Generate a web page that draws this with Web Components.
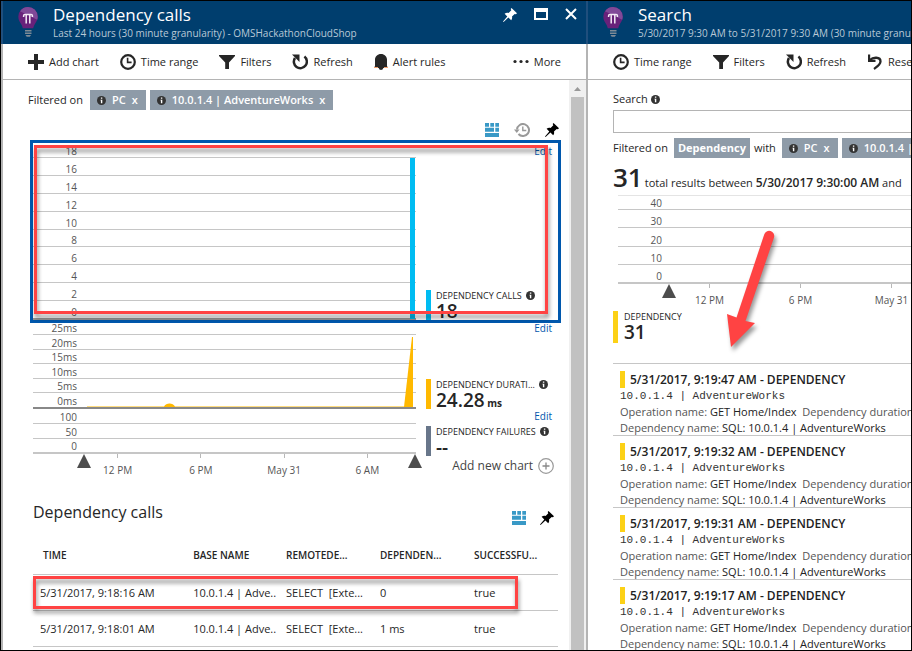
<!DOCTYPE html>
<html lang="en">
<head>
<meta charset="utf-8">
<title>Dependency calls</title>
<style>
  html, body { height: 100%; }
  body { margin: 0; overflow: hidden; background: #000; font-family: "Open Sans", "Noto Sans", sans-serif; font-size: 11px; line-height: 16px; color: #262626; }
</style>
</head>
<body>
<portal-page></portal-page>
<script>
const ICONS = {
  plus: [16, 16, '<path d="M6 0h4v6h6v4h-6v6H6v-6H0V6h6z" fill="currentColor"/>'],
  clock: [16, 16, '<circle cx="8" cy="8" r="6.8" fill="none" stroke="currentColor" stroke-width="2.2"/><path d="M7.6 3.8v4.6h4" fill="none" stroke="currentColor" stroke-width="1.6"/>'],
  funnel: [16, 16, '<path d="M0 1h16v1L10 8.4V15H6.200V8.400L0 2z" fill="currentColor"/>'],
  refresh: [16, 16, '<path d="M12.400 2.600A6.500 6.500 0 1 1 3 4" fill="none" stroke="currentColor" stroke-width="2.500"/><path d="M0 .5h7.500V8z" fill="currentColor"/>'],
  bell: [14, 16, '<path d="M1 12V5.500C1 2.500 3.500 0 7 0s6 2.500 6 5.500V12l1 2H9.300A2.400 2.400 0 0 1 7 16a2.400 2.400 0 0 1-2.300-2H0z" fill="currentColor"/><path d="M0 13.500h4M10 13.500h4" stroke="#f0a070" stroke-width="1"/>'],
  dots: [16, 16, '<circle cx="2" cy="7.500" r="1.600" fill="currentColor"/><circle cx="8" cy="7.500" r="1.600" fill="currentColor"/><circle cx="14" cy="7.500" r="1.600" fill="currentColor"/>'],
  undo: [16, 16, '<path d="M2.800 6C6 3 13.500 2.500 13.500 7.500c0 3-3 5-6.500 7.500" fill="none" stroke="currentColor" stroke-width="2.300"/><path d="M1 .5v7.500h7.500V5.800H3.200V.5z" fill="currentColor"/>'],
  pin: [14, 14, '<path d="M8.500 0L14 5.200l-1.100 1-1.200-.3-2.700 2.500c.4 1.600 0 2.800-.8 3.800L5.400 9.500.6 14 0 13.400l4.300-5L1.600 5.700c1.200-.9 2.500-1.200 4-.8L8.300 2.200 7.700 1z" fill="currentColor"/>'],
  maximize: [14, 12, '<path d="M0 0h14v12H0zM2 4v6h10V4z" fill="currentColor" fill-rule="evenodd"/>'],
  close: [12, 12, '<path d="M1 1l10 10M11 1L1 11" stroke="currentColor" stroke-width="2"/>'],
  tiles: [14, 14, '<path d="M0 0h4v3.700H0zM5.300 0H9v3.700H5.300zM10.300 0H14v3.700h-3.700zM0 4.800h9v4H0zM10.300 4.800H14v4h-3.700zM0 9.900h14V14H0z" fill="#3999c6"/>'],
  history: [16, 14, '<path d="M3 6.500A6 6 0 1 1 4.500 11" fill="none" stroke="#999" stroke-width="2"/><path d="M0 6.500h5.600L2.800 10z" fill="#999"/><path d="M8.800 3.500v4h3.500" fill="none" stroke="#999" stroke-width="1.400"/>'],
  info: [9, 9, '<circle cx="4.500" cy="4.500" r="4.500" fill="#333"/><path d="M3.900 1.500h1.400v1.300H3.900zM3.500 3.700h1.800v3.600H3.900V4.400h-.4z" fill="#fff"/>'],
  addcircle: [16, 16, '<circle cx="8" cy="8" r="7.300" fill="none" stroke="#999" stroke-width="1.200"/><path d="M8 4.500v7M4.500 8h7" stroke="#888" stroke-width="1.300"/>'],
  bulb: [20, 31, '<path d="M10 0a9.700 9.700 0 0 1 9.700 9.700c0 3.700-2 5.800-3.200 8-.8 1.500-1 2.500-1.300 3.600H4.800c-.3-1.100-.5-2.100-1.300-3.600-1.200-2.200-3.200-4.300-3.200-8A9.700 9.700 0 0 1 10 0z" fill="#68217a"/><path d="M10 0a9.700 9.700 0 0 1 9.700 9.700c0 1.200-.2 2-.5 3L2 4.300A9.700 9.700 0 0 1 10 0z" fill="#804998"/><path d="M5.600 10V8.700a1.300 1.300 0 0 1 1.300-1.300h6.200a1.300 1.300 0 0 1 1.300 1.300V10M8.200 7.400v9.200M11.800 7.400v9.200" fill="none" stroke="#f3e8f5" stroke-width="1.500"/><path d="M7 23.800h6.500M7 26.300h6.500" stroke="#7f8b96" stroke-width="1.400"/><path d="M7.500 28h5.500l-1.200 1.800H8.700z" fill="#7f8b96"/>']
};
const RESET = 'button{font:inherit;color:inherit;background:none;border:0;padding:0;margin:0;display:flex;align-items:center;cursor:pointer;white-space:nowrap}a{color:#0058ad;text-decoration:none}';

class BaseElement extends HTMLElement {
  connectedCallback() {
    if (this.shadowRoot) return;
    this.attachShadow({ mode: 'open' }).innerHTML = '<style>' + RESET + this.css() + '</style>' + this.html();
  }
  css() { return ''; }
  html() { return '<slot></slot>'; }
  a(name) { return this.getAttribute(name) || ''; }
}

customElements.define('ui-icon', class extends BaseElement {
  css() { return ':host{display:block;flex:none}svg{display:block}'; }
  html() {
    const [w, h, body] = ICONS[this.a('name')];
    return `<svg width="${w}" height="${h}" viewBox="0 0 ${w} ${h}" aria-hidden="true">${body}</svg>`;
  }
});

customElements.define('command-button', class extends BaseElement {
  css() { return ':host{display:block;flex:none}button{gap:5px;line-height:16px}'; }
  html() { return `<button type="button"><ui-icon name="${this.a('icon')}"></ui-icon><slot></slot></button>`; }
});

customElements.define('portal-blade', class extends BaseElement {
  css() {
    return `:host{display:flex;flex-direction:column;min-width:0;min-height:0;overflow:hidden;background:#fff;position:relative}
    header{display:flex;flex:none;height:43px;background:#003e6e;border-left:2px solid #204f7d;color:#fff;white-space:nowrap}
    header>ui-icon{padding:6px 15px 0}
    .t{flex:1;min-width:0;overflow:hidden}
    h1{margin:0;font-weight:400;font-size:17px;line-height:22px;padding-top:3px}
    p{margin:0;color:#b8c8d6;font-size:10px;line-height:14px}
    .bar{display:flex;flex:none;gap:21px;height:34px;align-items:center;border-bottom:1px solid #b4b4b4;border-left:2px solid #b4b4b4;padding:1px 25px 0;white-space:nowrap}
    .body{flex:1;min-height:0;min-width:0;border-left:2px solid #b4b4b4;display:flex}`;
  }
  html() {
    return `<header><ui-icon name="bulb"></ui-icon><div class="t"><h1>${this.a('heading')}</h1><p>${this.a('detail')}</p></div><slot name="window"></slot></header>
    <div class="bar"><slot name="commands"></slot></div><div class="body"><slot></slot></div>`;
  }
});

customElements.define('filter-chip', class extends BaseElement {
  css() {
    return `:host{display:flex;flex:none;align-items:center;height:20px;background:#8e9ba8;color:#fff;font-weight:600;font-size:11px;white-space:nowrap;padding:0 8px 0 7px}
    :host([plain]){padding:0 4px;font-weight:700}ui-icon{margin-right:6px}button{margin-left:6px}`;
  }
  html() {
    return this.hasAttribute('plain') ? '<slot></slot>' : '<ui-icon name="info"></ui-icon><slot></slot><button type="button" aria-label="Remove filter">x</button>';
  }
});

customElements.define('callout-box', class extends BaseElement {
  css() { return ':host{position:absolute;box-sizing:border-box;border:3px solid #ff4343;filter:drop-shadow(1px 4px 2px rgba(0,0,0,.45));pointer-events:none}'; }
});

customElements.define('chart-plot', class extends BaseElement {
  css() {
    return `:host{display:flex;flex-direction:column;position:relative;min-width:0}
    .r{display:flex;align-items:flex-end;flex:1;box-sizing:border-box;border-bottom:1px solid #c6c6c6}
    .r:first-of-type{flex:none;height:var(--first,15px)}
    .r:last-of-type{border-bottom:var(--base,1px solid #c6c6c6)}
    .r span{width:44px;text-align:right;font-size:10px;line-height:11px;color:#555}
    ::slotted(svg){position:absolute;left:0;top:0;width:100%;height:100%}`;
  }
  html() { return this.a('labels').split(',').map(t => `<div class="r"><span>${t}</span></div>`).join('') + '<slot></slot>'; }
});

customElements.define('time-axis', class extends BaseElement {
  css() {
    return `:host{display:flex;position:relative;height:24px;padding:0 7px 0 43px}
    .c{flex:1 0 var(--cell,0px);display:flex;flex-direction:column;align-items:center;font-size:10px;line-height:13px;color:#555;white-space:nowrap}
    .c::before{content:"";width:1px;height:4px;background:#b8b8b8;margin-bottom:6px}
    svg{position:absolute;left:44px;top:0}svg+svg{left:auto;right:-6px}`;
  }
  html() {
    const tri = '<svg width="14" height="14" viewBox="0 0 14 14" aria-hidden="true"><path d="M7 0l7 14H0z" fill="#4d4d4d"/></svg>';
    return tri + (this.hasAttribute('range') ? tri : '') + this.a('labels').split(',').map(t => `<div class="c">${t}</div>`).join('');
  }
});

customElements.define('metric-value', class extends BaseElement {
  css() {
    return `:host{display:block;flex:none;box-sizing:border-box;height:var(--h,30px);border-left:5px solid var(--tone);padding-left:5px;white-space:nowrap;overflow:hidden}
    .n{display:flex;align-items:center;gap:4px;font-size:9px;line-height:11px;height:11px}
    .v{font-size:19px;line-height:20px;font-weight:600}
    small{font-size:10px;font-weight:700}`;
  }
  html() {
    const unit = this.a('unit');
    return `<div class="n"><span>${this.a('name')}</span>${this.hasAttribute('plain') ? '' : '<ui-icon name="info"></ui-icon>'}</div><div class="v">${this.a('value')}${unit ? `<small> ${unit}</small>` : ''}</div>`;
  }
});

customElements.define('metric-chart', class extends BaseElement {
  css() {
    return `:host{display:flex;gap:10px;position:relative}
    .plot{flex:1;min-width:0;display:flex;flex-direction:column}
    .side{width:132px;flex:none;display:flex;flex-direction:column;justify-content:var(--side,space-between)}
    .e{text-align:right;padding-right:6px;height:17px;line-height:var(--edit,16px);font-size:10px}`;
  }
  html() { return '<div class="plot"><slot></slot></div><div class="side"><div class="e"><a href="#edit">Edit</a></div><slot name="side"></slot></div>'; }
});

customElements.define('scroll-rail', class extends BaseElement {
  css() { return ':host{display:flex;flex-direction:column;width:17px;flex:none;background:#f0f0f0;align-items:center}svg{flex:none;margin:7px 0 6px}i{width:13px;flex:1;background:#c1c1c1}'; }
  html() { return '<svg width="7" height="4" viewBox="0 0 7 4" aria-hidden="true"><path d="M3.500 0L7 4H0z" fill="#999"/></svg><i></i>'; }
});

customElements.define('calls-table', class extends BaseElement {
  css() {
    return `:host{display:block;position:relative}
    table{width:100%;border-collapse:collapse;table-layout:fixed}
    col:nth-child(1){width:30.500%}col:nth-child(2){width:17.700%}col:nth-child(3),col:nth-child(4){width:17.900%}
    th,td{height:35px;padding:0;border-bottom:1px solid #c6c6c6;text-align:left;white-space:pre;font-size:11px;line-height:16px}
    th{font-size:10px;font-weight:600;padding-bottom:4px;height:31px}
    td:first-child{padding-left:7px}th:first-child{padding-left:10px}
    callout-box{left:0;right:40px;top:37px;height:33px}`;
  }
  html() {
    const rows = [['5/31/2017, 9:18:16 AM', '10.0.1.4 | Adve..', 'SELECT  [Exte...', '0', 'true'], ['5/31/2017, 9:18:01 AM', '10.0.1.4 | Adve..', 'SELECT  [Exte...', '1 ms', 'true']];
    return `<table><colgroup><col><col><col><col><col></colgroup><thead><tr>${['TIME', 'BASE NAME', 'REMOTEDE...', 'DEPENDEN...', 'SUCCESSFU...'].map(t => `<th scope="col">${t}</th>`).join('')}</tr></thead>
    <tbody>${rows.map(r => `<tr>${r.map(t => `<td>${t}</td>`).join('')}</tr>`).join('')}</tbody></table><callout-box></callout-box>`;
  }
});

customElements.define('search-result', class extends BaseElement {
  css() {
    return `:host{display:block;box-sizing:border-box;height:72px;border-top:1px solid #c6c6c6;padding:7px 0 0 7px;white-space:pre;line-height:16px;color:#555}
    h3{margin:0;border-left:5px solid #fcd116;padding-left:5px;font-size:12px;line-height:17px;font-weight:600;color:#222}
    .m{font-family:"Liberation Mono",monospace;color:#333}b{font-weight:400;color:#222}`;
  }
  html() {
    return `<h3>5/31/2017, ${this.a('time')} AM - DEPENDENCY</h3><div class="m">10.0.1.4 | AdventureWorks</div><div>Operation name: <b>GET Home/Index</b>  Dependency duration: <b>0 ms</b></div><div>Dependency name: <b>SQL: 10.0.1.4 | AdventureWorks</b></div>`;
  }
});

customElements.define('calls-panel', class extends BaseElement {
  css() {
    return `:host{display:flex;flex:1;min-width:0}
    main{flex:1;min-width:0;overflow:hidden}
    .f{display:flex;align-items:center;gap:4px;padding:10px 0 0 25px;height:20px}
    .f span{margin-right:3px}
    .tools{display:flex;align-items:center;justify-content:flex-end;gap:15px;height:16px;padding:12px 10px 2px}
    .sel{margin:0 8px 0 27px;border:3px solid #0058ad;position:relative}
    .s{margin:0 11px 0 30px}
    .one chart-plot{height:177px;--base:2px solid #999}
    .two chart-plot{height:86px;--first:12px;--base:2px solid #888}
    .three chart-plot{height:45px;--base:2px solid #c6c6c6}
    .two{--edit:10px}.three{--edit:14px;--side:flex-start}
    .sel callout-box{left:1px;right:10px;top:2px;bottom:6px}
    .add{display:flex;justify-content:flex-end;padding:2px 4px 0 0}
    .add button{gap:5px;font-size:12px;color:#444}
    .h{display:flex;align-items:center;margin-top:21px;margin-bottom:14px;height:26px;padding-right:4px;gap:14px}
    h2{flex:1;margin:0;font-size:16px;line-height:20px;font-weight:400}
    .h ui-icon{padding-top:12px}`;
  }
  html() {
    return `<main>
      <div class="f"><span>Filtered on</span><filter-chip>PC</filter-chip><filter-chip>10.0.1.4 | AdventureWorks</filter-chip></div>
      <div class="tools"><button type="button" aria-label="Tiles"><ui-icon name="tiles"></ui-icon></button><button type="button" aria-label="History"><ui-icon name="history"></ui-icon></button><button type="button" aria-label="Pin chart" style="color:#000"><ui-icon name="pin"></ui-icon></button></div>
      <div class="sel"><metric-chart class="one">
        <chart-plot labels="18,16,14,12,10,8,6,4,2,0"><svg viewBox="0 0 383 177" preserveAspectRatio="none" aria-hidden="true"><path d="M377 15h5v161h-5z" fill="#00bcf2"/></svg></chart-plot>
        <metric-value slot="side" name="DEPENDENCY CALLS" value="18" style="--tone:#00bcf2"></metric-value>
      </metric-chart><callout-box></callout-box></div>
      <metric-chart class="two s">
        <chart-plot labels="25ms,20ms,15ms,10ms,5ms,0ms"><svg viewBox="0 0 383 86" preserveAspectRatio="none" aria-hidden="true"><path d="M371 84l8-70h1v70z" fill="#ffb900"/><path d="M54 83.500h77c2-4 9-4 11 0h230v.6H54z" fill="#ffb900"/></svg></chart-plot>
        <metric-value slot="side" name="DEPENDENCY DURATI..." value="24.28" unit="ms" style="--tone:#ffb900"></metric-value>
      </metric-chart>
      <metric-chart class="three s">
        <chart-plot labels="100,50,0"></chart-plot>
        <time-axis range labels="12 PM,6 PM,May 31,6 AM"></time-axis>
        <metric-value slot="side" name="DEPENDENCY FAILURES" value="--" style="--tone:#68768a"></metric-value>
        <div class="add" slot="side"><button type="button">Add new chart<ui-icon name="addcircle"></ui-icon></button></div>
      </metric-chart>
      <div class="s h"><h2>Dependency calls</h2><ui-icon name="tiles"></ui-icon><ui-icon name="pin" style="color:#000"></ui-icon></div>
      <calls-table class="s"></calls-table>
    </main><scroll-rail></scroll-rail>`;
  }
});

customElements.define('search-panel', class extends BaseElement {
  css() {
    return `:host{display:block;flex:1;min-width:0;overflow:hidden;padding-left:25px;white-space:nowrap}
    label{display:flex;align-items:center;gap:3px;padding:11px 0 3px}
    input{display:block;box-sizing:border-box;width:calc(100% + 20px);height:23px;border:1px solid #b4b4b4;padding:0 6px;font:inherit;background:#fff;outline:0}
    .f{display:flex;align-items:center;height:20px;gap:4px;margin-top:5px}
    .f span{margin-right:2px}
    .n{line-height:36px;height:36px;margin:1px 0 0}
    .n strong{font-size:26px;font-weight:600;margin-right:2px}.n b{font-size:12px;font-weight:600}
    .c{margin-left:5px}
    chart-plot{height:89px;border-top:1px solid #e4e4e4;--first:14px;--base:2px solid #c6c6c6;box-sizing:border-box}
    time-axis{--cell:91px;padding:0 0 0 46px}
    metric-value{--tone:#fcd116;--h:32px;margin:3px 0 20px;padding-left:6px}
    .arrow{position:absolute;left:calc(100% - 191px);top:226px;filter:drop-shadow(2px 4px 2px rgba(0,0,0,.4));pointer-events:none}`;
  }
  html() {
    return `<label for="q">Search <ui-icon name="info"></ui-icon></label><input id="q" type="text">
    <div class="f"><span>Filtered on</span><filter-chip plain>Dependency</filter-chip><span>with</span><filter-chip>PC</filter-chip><filter-chip>10.0.1.4 | AdventureWorks</filter-chip></div>
    <p class="n"><strong>31</strong>total results between <b>5/30/2017 9:30:00 AM</b> and</p>
    <div class="c"><chart-plot labels="40,30,20,10,0"></chart-plot><time-axis labels="12 PM,6 PM,May 31"></time-axis></div>
    <metric-value plain name="DEPENDENCY" value="31"></metric-value>
    ${['9:19:47', '9:19:32', '9:19:31', '9:19:17'].map(t => `<search-result time="${t}"></search-result>`).join('')}
    <svg class="arrow" width="60" height="124" viewBox="720 226 60 124" aria-hidden="true"><path d="M764.200 233.500A5 5 0 0 1 774 236.500L745.500 320L755 322L731 346L727 313L736.500 316.500Z" fill="#ff4343"/></svg>`;
  }
});

customElements.define('portal-page', class extends BaseElement {
  css() {
    return `:host{display:grid;grid-template-columns:minmax(0,585fr) minmax(0,325fr);box-sizing:border-box;height:100vh;border:1px solid #000;overflow:hidden}
    .win{display:flex;align-items:flex-start;gap:17px;padding:7px 9px 0 0}
    .more{margin-left:auto}`;
  }
  html() {
    return `<portal-blade heading="Dependency calls" detail="Last 24 hours (30 minute granularity) - OMSHackathonCloudShop">
      <div slot="window" class="win">
        <button type="button" aria-label="Pin"><ui-icon name="pin"></ui-icon></button>
        <button type="button" aria-label="Maximize"><ui-icon name="maximize"></ui-icon></button>
        <button type="button" aria-label="Close"><ui-icon name="close"></ui-icon></button>
      </div>
      <command-button slot="commands" icon="plus">Add chart</command-button>
      <command-button slot="commands" icon="clock">Time range</command-button>
      <command-button slot="commands" icon="funnel">Filters</command-button>
      <command-button slot="commands" icon="refresh">Refresh</command-button>
      <command-button slot="commands" icon="bell">Alert rules</command-button>
      <command-button slot="commands" icon="dots" class="more">More</command-button>
      <calls-panel></calls-panel>
    </portal-blade>
    <portal-blade heading="Search" detail="5/30/2017 9:30 AM to 5/31/2017 9:30 AM (30 minute granularity)">
      <command-button slot="commands" icon="clock">Time range</command-button>
      <command-button slot="commands" icon="funnel">Filters</command-button>
      <command-button slot="commands" icon="refresh">Refresh</command-button>
      <command-button slot="commands" icon="undo">Reset</command-button>
      <search-panel></search-panel>
    </portal-blade>`;
  }
});
</script>
</body>
</html>
